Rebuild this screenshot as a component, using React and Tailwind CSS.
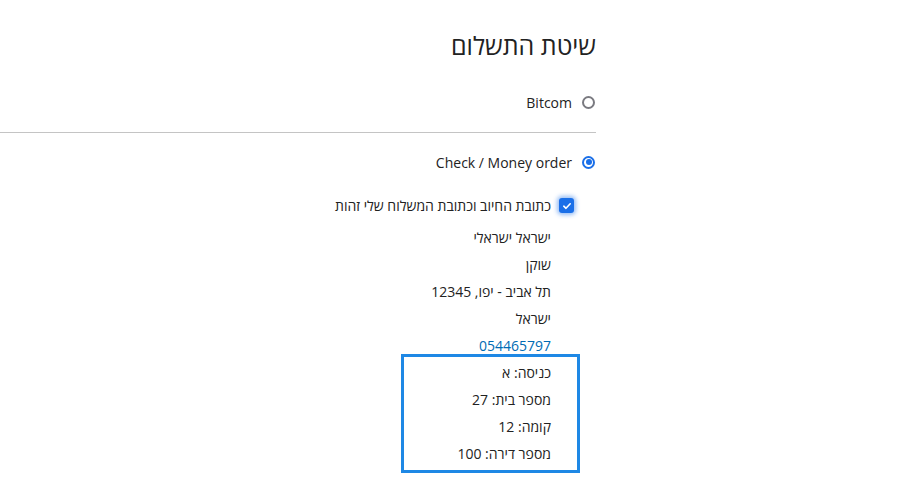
import React from 'react';

const font = { fontFamily: '"Open Sans", "Noto Sans", sans-serif' };

const Radio = ({ checked }) => (
  <span
    className={`inline-flex h-[13px] w-[13px] items-center justify-center rounded-full border-2 ${
      checked ? 'border-[#1a6fe8]' : 'border-[#7a7a80]'
    }`}
  >
    {checked && <span className="h-[6px] w-[6px] rounded-full bg-[#1a6fe8]" />}
  </span>
);

export default function App() {
  const address = ['ישראל ישראלי', 'שוקן', 'תל אביב - יפו, 12345', 'ישראל'];
  const extra = ['כניסה: א', 'מספר בית: 27', 'קומה: 12', 'מספר דירה: 100'];

  return (
    <div className="min-h-[499px] bg-white text-[#222]" style={font}>
      <div dir="rtl" className="w-[596px]">
        <h1 className="pt-[30px] text-[25px] font-medium leading-[30px] text-[#222]">שיטת התשלום</h1>

        {/* Bitcom */}
        <div className="mt-[35px] flex h-[14px] items-center gap-[10px] pr-[1px]">
          <Radio />
          <span className="text-[14px]">Bitcom</span>
        </div>

        <div className="mt-[23px] h-px bg-[#c4c4c4]" />

        {/* Check / Money order */}
        <div className="mt-[22px] flex h-[14px] items-center gap-[10px] pr-[1px]">
          <Radio checked />
          <span className="text-[14px]">Check / Money order</span>
        </div>

        {/* same address */}
        <div className="mt-[26px] flex items-center gap-[8px] pr-[22px]">
          <span className="flex h-[15px] w-[15px] items-center justify-center rounded-[3px] bg-[#1a6fe8] shadow-[0_0_4px_2px_rgba(26,111,232,0.45)]">
            <svg width="10" height="10" viewBox="0 0 10 10" fill="none">
              <path d="M1.8 5.2 L4 7.3 L8.2 2.8" stroke="white" strokeWidth="1.6" strokeLinecap="round" strokeLinejoin="round" />
            </svg>
          </span>
          <span className="text-[14px]">כתובת החיוב וכתובת המשלוח שלי זהות</span>
        </div>

        {/* address */}
        <div className="mt-[8px] pr-[45px] text-[14px] leading-[27px]">
          {address.map((line) => (
            <div key={line}>{line}</div>
          ))}
          <div className="text-[#006bb4]">054465797</div>
        </div>

        <div className="mr-[16px] mt-[-5px] w-[179px] border-[3px] border-[#1e88e5] pr-[26px] pt-[2px] pb-[3px] text-[14px] leading-[27px]">
          {extra.map((line) => (
            <div key={line}>{line}</div>
          ))}
        </div>
      </div>
    </div>
  );
}
